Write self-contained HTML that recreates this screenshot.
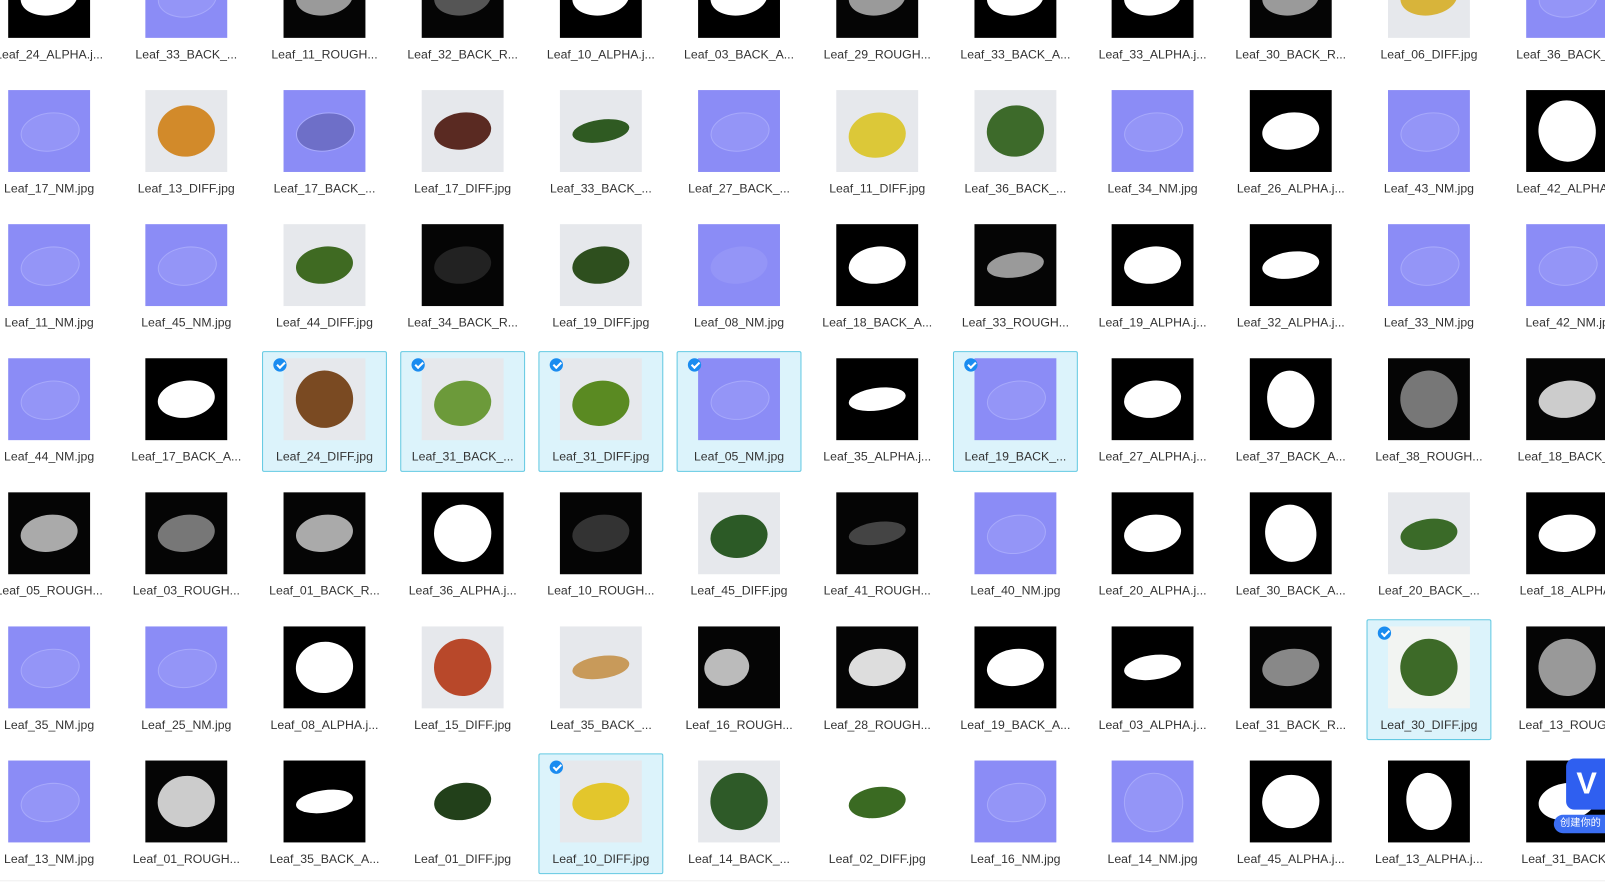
<!DOCTYPE html>
<html><head><meta charset="utf-8"><style>
html,body{margin:0;padding:0;width:1605px;height:891px;overflow:hidden;background:#fff;font-family:"Liberation Sans","Noto Sans CJK SC",sans-serif;}
#w{position:absolute;left:0;top:0;width:1568px;height:871px;transform:scale(1.0236);transform-origin:0 0}
.c{position:absolute;width:134px;height:120px}
.s{position:absolute;left:6px;top:-7px;width:120px;height:116px;background:#dcf3fb;border:1px solid #63c9e2;border-radius:2px}
.s:after{content:"";position:absolute;left:10px;top:6px;width:13px;height:13px;border-radius:50%;background:#1a8cf0;z-index:3}
.s:before{content:"";position:absolute;left:15px;top:8px;width:3px;height:6px;border:solid #fff;border-width:0 2px 2px 0;transform:rotate(45deg);z-index:4}
.t{position:absolute;left:27px;top:0;width:80px;height:80px;overflow:hidden}
.t i{position:absolute;left:12px;top:22px;width:56px;height:36px;border-radius:50%;transform:rotate(-8deg)}
.N{background:#8b8cf6}.N i{border:1px solid #a7a9fb;background:#9495f7}
.B{background:#000}.B i{background:#fff}
.R{background:#050505}.R i{background:#9a9a9a}
.D{background:#e6e8ec}
.l{position:absolute;left:0;top:89px;width:134px;text-align:center;font-size:12px;color:#333;white-space:nowrap}
</style></head><body>
<div id="w">
<!-- row0 -->
<div class="c" style="left:-19px;top:-43px"><div class="t B"><i></i></div><div class="l">Leaf_24_ALPHA.j...</div></div>
<div class="c" style="left:115px;top:-43px"><div class="t N"><i></i></div><div class="l">Leaf_33_BACK_...</div></div>
<div class="c" style="left:250px;top:-43px"><div class="t R"><i></i></div><div class="l">Leaf_11_ROUGH...</div></div>
<div class="c" style="left:385px;top:-43px"><div class="t R"><i style="background:#555"></i></div><div class="l">Leaf_32_BACK_R...</div></div>
<div class="c" style="left:520px;top:-43px"><div class="t B"><i></i></div><div class="l">Leaf_10_ALPHA.j...</div></div>
<div class="c" style="left:655px;top:-43px"><div class="t B"><i></i></div><div class="l">Leaf_03_BACK_A...</div></div>
<div class="c" style="left:790px;top:-43px"><div class="t R"><i></i></div><div class="l">Leaf_29_ROUGH...</div></div>
<div class="c" style="left:925px;top:-43px"><div class="t B"><i></i></div><div class="l">Leaf_33_BACK_A...</div></div>
<div class="c" style="left:1059px;top:-43px"><div class="t B"><i></i></div><div class="l">Leaf_33_ALPHA.j...</div></div>
<div class="c" style="left:1194px;top:-43px"><div class="t R"><i></i></div><div class="l">Leaf_30_BACK_R...</div></div>
<div class="c" style="left:1329px;top:-43px"><div class="t D"><i style="background:#d8b43a"></i></div><div class="l">Leaf_06_DIFF.jpg</div></div>
<div class="c" style="left:1464px;top:-43px"><div class="t N"><i></i></div><div class="l">Leaf_36_BACK_...</div></div>
<!-- row1 -->
<div class="c" style="left:-19px;top:88px"><div class="t N"><i></i></div><div class="l">Leaf_17_NM.jpg</div></div>
<div class="c" style="left:115px;top:88px"><div class="t D"><i style="background:#d28a2a;height:50px;top:15px"></i></div><div class="l">Leaf_13_DIFF.jpg</div></div>
<div class="c" style="left:250px;top:88px"><div class="t N"><i style="background:#6e6fc8"></i></div><div class="l">Leaf_17_BACK_...</div></div>
<div class="c" style="left:385px;top:88px"><div class="t D"><i style="background:#5a2a22"></i></div><div class="l">Leaf_17_DIFF.jpg</div></div>
<div class="c" style="left:520px;top:88px"><div class="t D"><i style="background:#2f5a22;height:22px;top:29px"></i></div><div class="l">Leaf_33_BACK_...</div></div>
<div class="c" style="left:655px;top:88px"><div class="t N"><i></i></div><div class="l">Leaf_27_BACK_...</div></div>
<div class="c" style="left:790px;top:88px"><div class="t D"><i style="background:#dcc838;height:44px"></i></div><div class="l">Leaf_11_DIFF.jpg</div></div>
<div class="c" style="left:925px;top:88px"><div class="t D"><i style="background:#3d6a2a;height:50px;top:15px"></i></div><div class="l">Leaf_36_BACK_...</div></div>
<div class="c" style="left:1059px;top:88px"><div class="t N"><i></i></div><div class="l">Leaf_34_NM.jpg</div></div>
<div class="c" style="left:1194px;top:88px"><div class="t B"><i></i></div><div class="l">Leaf_26_ALPHA.j...</div></div>
<div class="c" style="left:1329px;top:88px"><div class="t N"><i></i></div><div class="l">Leaf_43_NM.jpg</div></div>
<div class="c" style="left:1464px;top:88px"><div class="t B"><i style="height:60px;top:10px"></i></div><div class="l">Leaf_42_ALPHA...</div></div>
<!-- row2 -->
<div class="c" style="left:-19px;top:219px"><div class="t N"><i></i></div><div class="l">Leaf_11_NM.jpg</div></div>
<div class="c" style="left:115px;top:219px"><div class="t N"><i></i></div><div class="l">Leaf_45_NM.jpg</div></div>
<div class="c" style="left:250px;top:219px"><div class="t D"><i style="background:#3f6a22"></i></div><div class="l">Leaf_44_DIFF.jpg</div></div>
<div class="c" style="left:385px;top:219px"><div class="t R"><i style="background:#222"></i></div><div class="l">Leaf_34_BACK_R...</div></div>
<div class="c" style="left:520px;top:219px"><div class="t D"><i style="background:#2e4f1e"></i></div><div class="l">Leaf_19_DIFF.jpg</div></div>
<div class="c" style="left:655px;top:219px"><div class="t N"><i style="border:none"></i></div><div class="l">Leaf_08_NM.jpg</div></div>
<div class="c" style="left:790px;top:219px"><div class="t B"><i></i></div><div class="l">Leaf_18_BACK_A...</div></div>
<div class="c" style="left:925px;top:219px"><div class="t R"><i style="height:24px;top:28px"></i></div><div class="l">Leaf_33_ROUGH...</div></div>
<div class="c" style="left:1059px;top:219px"><div class="t B"><i></i></div><div class="l">Leaf_19_ALPHA.j...</div></div>
<div class="c" style="left:1194px;top:219px"><div class="t B"><i style="height:26px;top:27px"></i></div><div class="l">Leaf_32_ALPHA.j...</div></div>
<div class="c" style="left:1329px;top:219px"><div class="t N"><i></i></div><div class="l">Leaf_33_NM.jpg</div></div>
<div class="c" style="left:1464px;top:219px"><div class="t N"><i></i></div><div class="l">Leaf_42_NM.jp</div></div>
<!-- row3 -->
<div class="c" style="left:-19px;top:350px"><div class="t N"><i></i></div><div class="l">Leaf_44_NM.jpg</div></div>
<div class="c" style="left:115px;top:350px"><div class="t B"><i></i></div><div class="l">Leaf_17_BACK_A...</div></div>
<div class="c" style="left:250px;top:350px"><div class="s"></div><div class="t D"><i style="background:#7a4a22;height:56px;top:12px"></i></div><div class="l">Leaf_24_DIFF.jpg</div></div>
<div class="c" style="left:385px;top:350px"><div class="s"></div><div class="t D"><i style="background:#6c9a3a;height:44px"></i></div><div class="l">Leaf_31_BACK_...</div></div>
<div class="c" style="left:520px;top:350px"><div class="s"></div><div class="t D"><i style="background:#5a8a22;height:44px"></i></div><div class="l">Leaf_31_DIFF.jpg</div></div>
<div class="c" style="left:655px;top:350px"><div class="s"></div><div class="t N"><i></i></div><div class="l">Leaf_05_NM.jpg</div></div>
<div class="c" style="left:790px;top:350px"><div class="t B"><i style="height:22px;top:29px"></i></div><div class="l">Leaf_35_ALPHA.j...</div></div>
<div class="c" style="left:925px;top:350px"><div class="s"></div><div class="t N"><i></i></div><div class="l">Leaf_19_BACK_...</div></div>
<div class="c" style="left:1059px;top:350px"><div class="t B"><i></i></div><div class="l">Leaf_27_ALPHA.j...</div></div>
<div class="c" style="left:1194px;top:350px"><div class="t B"><i style="height:56px;top:12px;width:46px;left:17px"></i></div><div class="l">Leaf_37_BACK_A...</div></div>
<div class="c" style="left:1329px;top:350px"><div class="t R"><i style="background:#777;height:56px;top:12px"></i></div><div class="l">Leaf_38_ROUGH...</div></div>
<div class="c" style="left:1464px;top:350px"><div class="t R"><i style="background:#ccc"></i></div><div class="l">Leaf_18_BACK_F</div></div>
<!-- row4 -->
<div class="c" style="left:-19px;top:481px"><div class="t R"><i style="background:#aaa"></i></div><div class="l">Leaf_05_ROUGH...</div></div>
<div class="c" style="left:115px;top:481px"><div class="t R"><i style="background:#777"></i></div><div class="l">Leaf_03_ROUGH...</div></div>
<div class="c" style="left:250px;top:481px"><div class="t R"><i style="background:#aaa"></i></div><div class="l">Leaf_01_BACK_R...</div></div>
<div class="c" style="left:385px;top:481px"><div class="t B"><i style="height:56px;top:12px"></i></div><div class="l">Leaf_36_ALPHA.j...</div></div>
<div class="c" style="left:520px;top:481px"><div class="t R"><i style="background:#333"></i></div><div class="l">Leaf_10_ROUGH...</div></div>
<div class="c" style="left:655px;top:481px"><div class="t D"><i style="background:#2c5a26;height:42px"></i></div><div class="l">Leaf_45_DIFF.jpg</div></div>
<div class="c" style="left:790px;top:481px"><div class="t R"><i style="background:#444;height:22px;top:29px"></i></div><div class="l">Leaf_41_ROUGH...</div></div>
<div class="c" style="left:925px;top:481px"><div class="t N"><i></i></div><div class="l">Leaf_40_NM.jpg</div></div>
<div class="c" style="left:1059px;top:481px"><div class="t B"><i></i></div><div class="l">Leaf_20_ALPHA.j...</div></div>
<div class="c" style="left:1194px;top:481px"><div class="t B"><i style="height:56px;top:12px;width:50px;left:15px"></i></div><div class="l">Leaf_30_BACK_A...</div></div>
<div class="c" style="left:1329px;top:481px"><div class="t D"><i style="background:#3a6a28;height:30px;top:26px"></i></div><div class="l">Leaf_20_BACK_...</div></div>
<div class="c" style="left:1464px;top:481px"><div class="t B"><i></i></div><div class="l">Leaf_18_ALPHA.</div></div>
<!-- row5 -->
<div class="c" style="left:-19px;top:612px"><div class="t N"><i></i></div><div class="l">Leaf_35_NM.jpg</div></div>
<div class="c" style="left:115px;top:612px"><div class="t N"><i></i></div><div class="l">Leaf_25_NM.jpg</div></div>
<div class="c" style="left:250px;top:612px"><div class="t B"><i style="height:50px;top:15px"></i></div><div class="l">Leaf_08_ALPHA.j...</div></div>
<div class="c" style="left:385px;top:612px"><div class="t D"><i style="background:#b8482a;height:56px;top:12px"></i></div><div class="l">Leaf_15_DIFF.jpg</div></div>
<div class="c" style="left:520px;top:612px"><div class="t D"><i style="background:#c89a5a;height:22px;top:29px"></i></div><div class="l">Leaf_35_BACK_...</div></div>
<div class="c" style="left:655px;top:612px"><div class="t R"><i style="background:#bbb;width:44px;left:6px"></i></div><div class="l">Leaf_16_ROUGH...</div></div>
<div class="c" style="left:790px;top:612px"><div class="t R"><i style="background:#ddd"></i></div><div class="l">Leaf_28_ROUGH...</div></div>
<div class="c" style="left:925px;top:612px"><div class="t B"><i></i></div><div class="l">Leaf_19_BACK_A...</div></div>
<div class="c" style="left:1059px;top:612px"><div class="t B"><i style="height:24px;top:28px"></i></div><div class="l">Leaf_03_ALPHA.j...</div></div>
<div class="c" style="left:1194px;top:612px"><div class="t R"><i style="background:#888"></i></div><div class="l">Leaf_31_BACK_R...</div></div>
<div class="c" style="left:1329px;top:612px"><div class="s"></div><div class="t D" style="background:#f2f4f2"><i style="background:#3d6a28;height:56px;top:12px"></i></div><div class="l">Leaf_30_DIFF.jpg</div></div>
<div class="c" style="left:1464px;top:612px"><div class="t R"><i style="background:#999;height:56px;top:12px"></i></div><div class="l">Leaf_13_ROUGH</div></div>
<!-- row6 -->
<div class="c" style="left:-19px;top:743px"><div class="t N"><i></i></div><div class="l">Leaf_13_NM.jpg</div></div>
<div class="c" style="left:115px;top:743px"><div class="t R"><i style="background:#ccc;height:50px;top:15px"></i></div><div class="l">Leaf_01_ROUGH...</div></div>
<div class="c" style="left:250px;top:743px"><div class="t B"><i style="height:22px;top:29px"></i></div><div class="l">Leaf_35_BACK_A...</div></div>
<div class="c" style="left:385px;top:743px"><div class="t D" style="background:#fff"><i style="background:#22401a"></i></div><div class="l">Leaf_01_DIFF.jpg</div></div>
<div class="c" style="left:520px;top:743px"><div class="s"></div><div class="t D"><i style="background:#e3c62c"></i></div><div class="l">Leaf_10_DIFF.jpg</div></div>
<div class="c" style="left:655px;top:743px"><div class="t D"><i style="background:#2e5a28;height:56px;top:12px"></i></div><div class="l">Leaf_14_BACK_...</div></div>
<div class="c" style="left:790px;top:743px"><div class="t D" style="background:#fff"><i style="background:#3a6a22;height:30px;top:26px"></i></div><div class="l">Leaf_02_DIFF.jpg</div></div>
<div class="c" style="left:925px;top:743px"><div class="t N"><i></i></div><div class="l">Leaf_16_NM.jpg</div></div>
<div class="c" style="left:1059px;top:743px"><div class="t N"><i style="height:56px;top:12px"></i></div><div class="l">Leaf_14_NM.jpg</div></div>
<div class="c" style="left:1194px;top:743px"><div class="t B"><i style="height:52px;top:14px"></i></div><div class="l">Leaf_45_ALPHA.j...</div></div>
<div class="c" style="left:1329px;top:743px"><div class="t B"><i style="height:56px;top:12px;width:44px;left:18px"></i></div><div class="l">Leaf_13_ALPHA.j...</div></div>
<div class="c" style="left:1464px;top:743px"><div class="t B"><i></i></div><div class="l">Leaf_31_BACK_</div></div>
<div style="position:absolute;left:1530px;top:741px;width:40px;height:50px;background:#2f5ff0;border-radius:8px 0 0 8px;color:#fff;font-size:30px;font-weight:bold;text-align:center;line-height:50px">V</div>
<div style="position:absolute;left:1518px;top:796px;width:60px;height:18px;background:#3b6ef2;border-radius:9px;color:#fff;font-size:10px;line-height:18px;padding-left:6px;font-family:'Liberation Sans','Noto Sans CJK SC',sans-serif">创建你的</div>
<div style="position:absolute;left:0;top:860px;width:1568px;height:1px;background:#eee"></div>
</div>
</body></html>
